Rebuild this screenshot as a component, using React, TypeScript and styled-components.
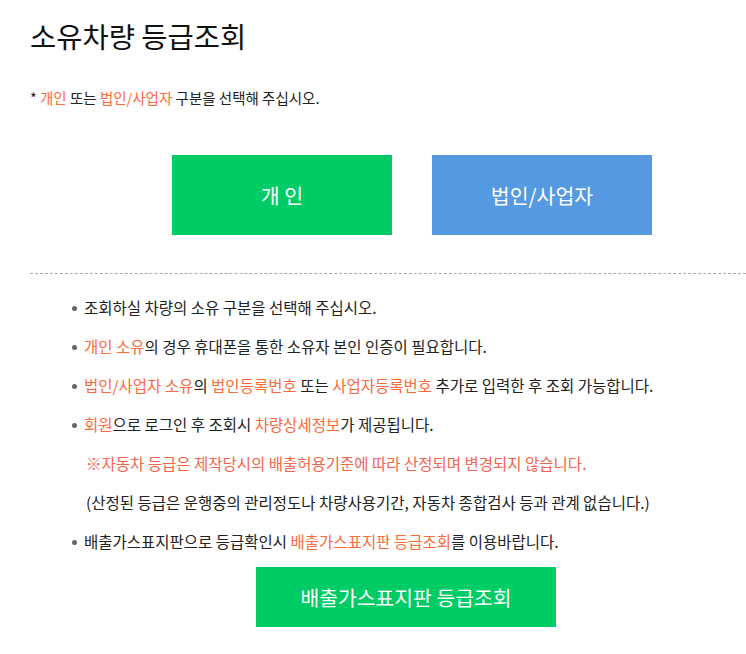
import React from "react";
import styled, { createGlobalStyle } from "styled-components";

const GlobalStyle = createGlobalStyle`
  html, body {
    margin: 0;
    padding: 0;
    background: #fff;
  }
  body {
    font-family: "Noto Sans CJK KR", "Noto Sans", sans-serif;
    color: #222;
  }
`;

const Page = styled.div`
  padding: 19px 0 30px 30px;
`;

const Title = styled.h1`
  margin: 0;
  font-size: 28.5px;
  font-weight: 400;
  line-height: 34px;
  color: #111;
`;

const Notice = styled.p`
  margin: 35px 0 0;
  font-size: 14.5px;
  line-height: 20px;
  color: #222;
`;

const Hi = styled.span<{ $tone?: "orange" | "red" }>`
  color: ${(p) => (p.$tone === "red" ? "#f3654d" : "#fb6b3b")};
`;

const ButtonRow = styled.div`
  display: flex;
  gap: 40px;
  margin-top: 47px;
  padding-left: 142px;
`;

const TypeButton = styled.button<{ $color: string }>`
  width: 220px;
  height: 80px;
  border: 0;
  padding: 0;
  background: ${(p) => p.$color};
  color: #fff;
  font-family: inherit;
  font-size: 20.5px;
  cursor: pointer;
`;

const Divider = styled.hr`
  margin: 38px 0 0;
  border: 0;
  border-top: 1px dashed #aaa;
  height: 0;
`;

const GuideList = styled.ul`
  list-style: none;
  margin: 14px 0 0;
  padding: 0 0 0 54px;
  font-size: 15.5px;
  line-height: 39px;
  color: #222;
`;

const GuideItem = styled.li<{ $bullet?: boolean }>`
  position: relative;
  padding-left: ${(p) => (p.$bullet ? "0" : "2px")};

  &::before {
    content: "";
    display: ${(p) => (p.$bullet ? "block" : "none")};
    position: absolute;
    left: -12px;
    top: 18px;
    width: 5px;
    height: 5px;
    border-radius: 50%;
    background: #666;
  }
`;

const LookupButton = styled.button`
  display: block;
  width: 300px;
  height: 60px;
  margin: 6px 0 0 172px;
  border: 0;
  padding: 0;
  background: #00cc66;
  color: #fff;
  font-family: inherit;
  font-size: 20.4px;
  cursor: pointer;
`;

const App: React.FC = () => {
  return (
    <>
      <GlobalStyle />
      <Page>
        <Title>소유차량 등급조회</Title>
        <Notice>
          * <Hi>개인</Hi> 또는 <Hi>법인/사업자</Hi> 구분을 선택해 주십시오.
        </Notice>

        <ButtonRow>
          <TypeButton $color="#00cc66">개 인</TypeButton>
          <TypeButton $color="#5599e2">법인/사업자</TypeButton>
        </ButtonRow>

        <Divider />

        <GuideList>
          <GuideItem $bullet>조회하실 차량의 소유 구분을 선택해 주십시오.</GuideItem>
          <GuideItem $bullet>
            <Hi>개인 소유</Hi>의 경우 휴대폰을 통한 소유자 본인 인증이 필요합니다.
          </GuideItem>
          <GuideItem $bullet>
            <Hi>법인/사업자 소유</Hi>의 <Hi>법인등록번호</Hi> 또는{" "}
            <Hi>사업자등록번호</Hi> 추가로 입력한 후 조회 가능합니다.
          </GuideItem>
          <GuideItem $bullet>
            <Hi>회원</Hi>으로 로그인 후 조회시 <Hi>차량상세정보</Hi>가 제공됩니다.
          </GuideItem>
          <GuideItem>
            <Hi $tone="red">
              ※자동차 등급은 제작당시의 배출허용기준에 따라 산정되며 변경되지 않습니다.
            </Hi>
          </GuideItem>
          <GuideItem>
            (산정된 등급은 운행중의 관리정도나 차량사용기간, 자동차 종합검사 등과 관계 없습니다.)
          </GuideItem>
          <GuideItem $bullet>
            배출가스표지판으로 등급확인시 <Hi>배출가스표지판 등급조회</Hi>를 이용바랍니다.
          </GuideItem>
          <li>
            <LookupButton>배출가스표지판 등급조회</LookupButton>
          </li>
        </GuideList>
      </Page>
    </>
  );
};

export default App;
